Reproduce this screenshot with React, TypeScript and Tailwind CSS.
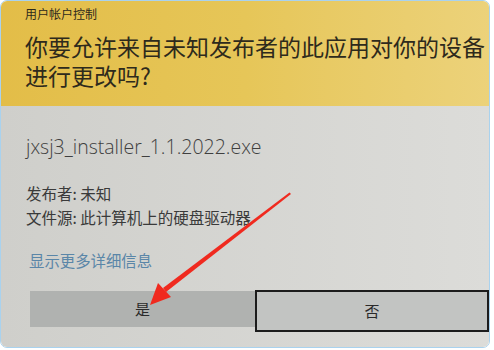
import React from 'react'

const cjk = '"Noto Sans CJK SC", "Noto Sans", sans-serif'

function Arrow() {
  return (
    <svg className="absolute left-0 top-0 pointer-events-none" width="494" height="350" viewBox="0 0 494 350">
      <polygon points="291,194 289.5,192.5 163,288 166,292" fill="#f02a1f" />
      <polygon points="150,305 158,283 171,297" fill="#f02a1f" />
    </svg>
  )
}

export default function App() {
  return (
    <div className="relative w-[494px] h-[350px] bg-white overflow-hidden">
      <div
        className="w-[490px] h-[348px] rounded-[7px] border border-[#a9d2ee] overflow-hidden flex flex-col"
        style={{ fontFamily: cjk }}
      >
        {/* yellow banner */}
        <div className="h-[105px] bg-gradient-to-r from-[#e3bd48] via-[#e6c658] to-[#ecd27a] pl-[24px] pt-[5px] text-[#2e2a1c] whitespace-nowrap">
          <div className="text-[12px] leading-[16px]">用户帐户控制</div>
          <div className="mt-[10px] text-[23px] leading-[29px] flex flex-col">
            <span className="h-[29px]">你要允许来自未知发布者的此应用对你的设备</span>
            <span className="h-[29px]">进行更改吗?</span>
          </div>
        </div>

        {/* body */}
        <div className="flex-1 bg-gradient-to-r from-[#cfcfcb] to-[#dcdcd9] flex flex-col">
          <div
            className="pl-[25px] pt-[27px] text-[19.5px] leading-[28px] font-light text-[#3f3f3f]"
            style={{ fontFamily: '"Open Sans", "Noto Sans", sans-serif' }}
          >
            jxsj3_installer_1.1.2022.exe
          </div>
          <div className="pl-[25px] mt-[20px] text-[15.5px] leading-[24px] text-[#3a3a3a]">
            <div>发布者: 未知</div>
            <div>文件源: 此计算机上的硬盘驱动器</div>
          </div>
          <div className="pl-[28px] mt-[21px] text-[15.4px] leading-[20px] text-[#5a86a8]">显示更多详细信息</div>

          <div className="mt-[20px] flex items-start">
            <div className="ml-[29px] mt-[1px] w-[227px] h-[36px] bg-[#b0b2b0] flex items-center justify-center text-[15px] text-[#2a2a2a]">
              是
            </div>
            <div className="w-[236px] h-[42px] border-2 border-[#1c1c1c] bg-[#c2c4c2] flex items-center justify-center text-[15px] text-[#2a2a2a]">
              否
            </div>
          </div>
        </div>
      </div>
      <Arrow />
    </div>
  )
}
